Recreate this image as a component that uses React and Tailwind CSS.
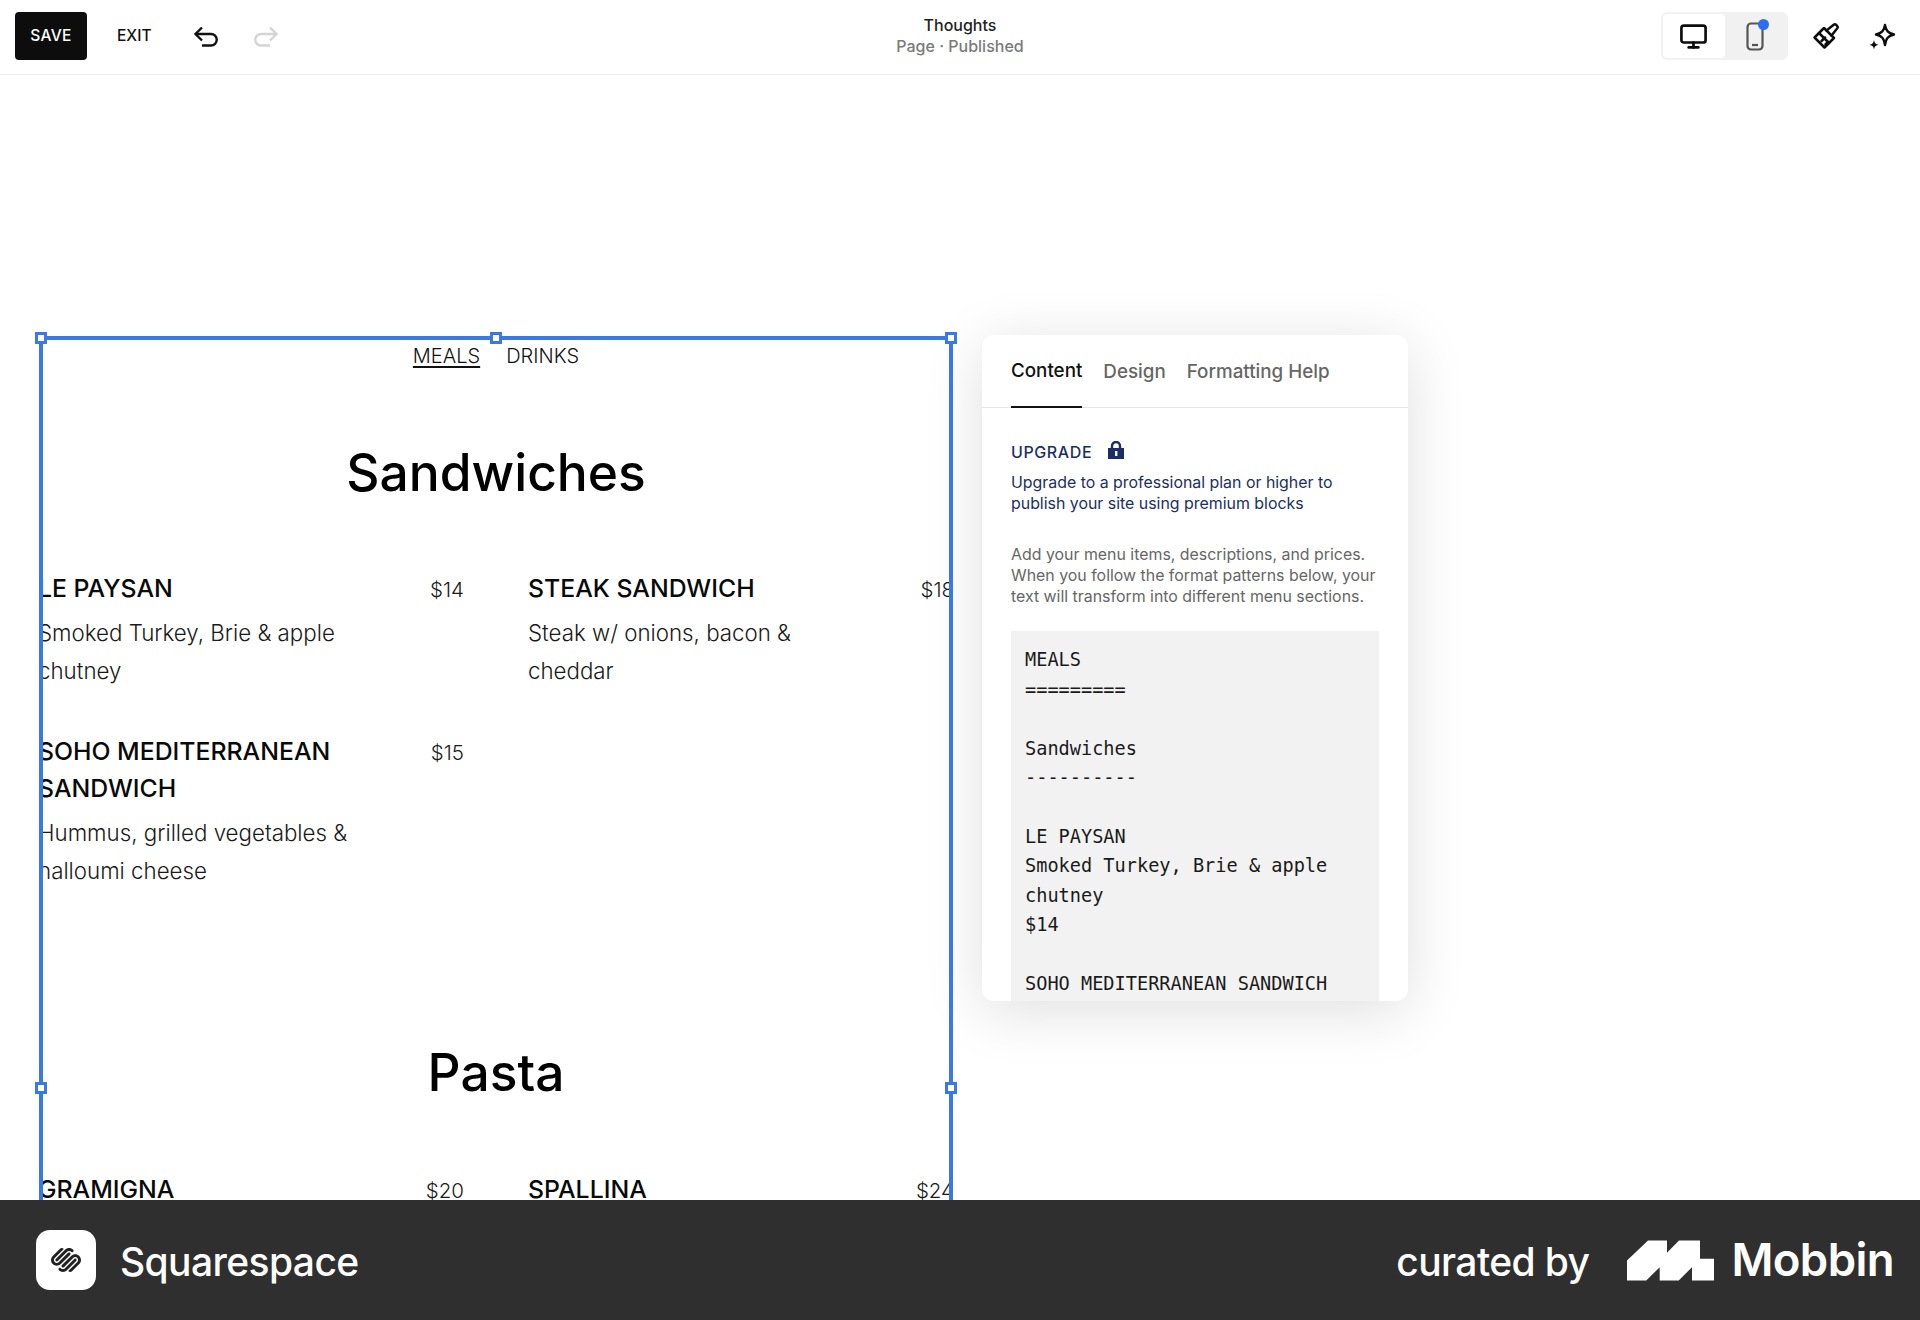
import React from 'react';
import { Monitor } from 'lucide-react';
import { SiSquarespace } from 'react-icons/si';

const UndoIcon = ({ flip, className }) => (
  <svg width="26" height="21" viewBox="0 0 26 21" fill="none" stroke="currentColor" strokeWidth="2.4" className={`${flip ? '-scale-x-100' : ''} ${className}`}>
    <path d="M9 1.5 L2.5 8 L9 14.5" />
    <path d="M2.5 8 H18 a5.5 5.5 0 0 1 0 11.5 H9" />
  </svg>
);

const PhoneIcon = () => (
  <svg width="18" height="29" viewBox="0 0 18 29" fill="none" stroke="currentColor" strokeWidth="2.2">
    <rect x="1.5" y="1.5" width="15" height="26" rx="3.5" />
    <path d="M6 23 H12" />
  </svg>
);

const BrushIcon = () => (
  <svg width="30" height="30" viewBox="0 0 30 30" fill="none" stroke="currentColor" strokeWidth="2.5" strokeLinejoin="round" strokeLinecap="round">
    <path d="M3.5 16.5 L13 7 L23 17 L13.5 26.5 Z" />
    <path d="M8 12 L18 22" />
    <path d="M10.5 20 L14 16.5" />
    <path d="M14.5 23.5 L17 21" />
    <path d="M15.5 9.5 L23 3.5 C24.5 2.5 27.5 5.5 26.5 7 L20.5 14.5" />
  </svg>
);

const SparkleIcon = () => (
  <svg width="30" height="30" viewBox="0 0 30 30" fill="none">
    <path d="M18 4 C19 10 21 12 27 13.5 C21 15 19 17 18 24 C17 17 15 15 9 13.5 C15 12 17 10 18 4 Z" stroke="currentColor" strokeWidth="2.4" strokeLinejoin="round" />
    <path d="M7 19 C7.5 22 8.5 23 11.5 23.8 C8.5 24.6 7.5 25.6 7 28.5 C6.5 25.6 5.5 24.6 2.5 23.8 C5.5 23 6.5 22 7 19 Z" fill="currentColor" />
  </svg>
);

const LockIcon = () => (
  <svg width="16" height="18" viewBox="0 0 16 18">
    <path d="M4 8 V5 a4 4 0 0 1 8 0 V8" fill="none" stroke="#1b2f66" strokeWidth="2.4" />
    <rect x="0" y="7" width="16" height="11" fill="#1b2f66" />
    <rect x="7" y="10" width="2.4" height="5" fill="#fff" />
  </svg>
);

const MobbinLogo = () => (
  <svg width="87" height="41" viewBox="0 0 87 40" fill="#fff">
    <path d="M0 40 L0 20 L21 0 L40 0 L40 12.3 L52 0 L73 0 L73 18.3 L87 18.3 L87 40 L65 40 L65 26.7 L51.7 40 L32.7 40 L32.7 26.7 L19.3 40 Z" />
  </svg>
);

const Handle = ({ className }) => (
  <div className={`absolute h-3 w-3 border-[3px] border-[#3b78e7] bg-white ${className}`} />
);

const MenuItem = ({ name, desc, price }) => (
  <div className="mb-[42px] flex justify-between">
    <div className="w-[330px]">
      <h3 className="text-[24.8px] leading-[37px] font-medium text-[#0a0a0a]">{name}</h3>
      {desc && <p className="mt-[7px] text-[22.3px] leading-[38.3px] font-light text-[#1a1a1a]">{desc}</p>}
    </div>
    <span className="mt-[5px] text-[20.5px] leading-[30px] font-light text-[#1a1a1a]">{price}</span>
  </div>
);

const codeLines = `MEALS
=========

Sandwiches
----------

LE PAYSAN
Smoked Turkey, Brie & apple
chutney
$14

SOHO MEDITERRANEAN SANDWICH`;

export default function App() {
  return (
    <div className="flex h-[1320px] w-[1920px] flex-col overflow-hidden bg-white font-['Inter',sans-serif]">
      {/* Top bar */}
      <header className="relative flex h-[75px] shrink-0 items-center justify-between border-b border-[#efefef] px-[15px] pb-[2px]">
        <div className="flex items-center">
          <button className="h-[48px] w-[72px] rounded-[4px] bg-[#0d0d0d] text-[15.5px] font-medium tracking-[0.3px] text-white">SAVE</button>
          <span className="ml-[30px] text-[15.5px] font-medium text-[#111]">EXIT</span>
          <UndoIcon className="ml-[41px] text-[#111]" />
          <UndoIcon flip className="ml-[34px] text-[#d4d4d4]" />
        </div>
        <div className="absolute left-0 right-0 top-[15px] text-center text-[16px] leading-[21px] font-medium">
          <div className="text-[#222]">Thoughts</div>
          <div className="text-[#7a7a7a]">Page · Published</div>
        </div>
        <div className="flex items-center text-[#0d0d0d]">
          <div className="flex h-[48px] w-[127px] rounded-[6px] bg-[#f1f1f1] p-[2px]">
            <div className="flex w-[62px] items-center justify-center rounded-[4px] bg-white pr-[2px]">
              <Monitor size={29} strokeWidth={2.2} />
            </div>
            <div className="relative flex flex-1 items-center justify-center pr-[2px] text-[#555]">
              <PhoneIcon />
              <span className="absolute right-[17px] top-[5px] h-[11px] w-[11px] rounded-full bg-[#2f6fed]" />
            </div>
          </div>
          <div className="ml-[23px]"><BrushIcon /></div>
          <div className="ml-[26px] mr-[8px]"><SparkleIcon /></div>
        </div>
      </header>

      {/* Canvas */}
      <main className="flex min-h-0 flex-1 items-start overflow-hidden pl-[39px] pt-[261px]">
        <div className="relative h-[1500px] w-[914px] shrink-0">
          <div className="h-full w-full overflow-hidden border-[4px] border-[#3b78e7]">
            <div className="-ml-[5px] w-[916px]">
              <div className="flex justify-center gap-[26px] pt-[2px] text-[20px] leading-[28px] font-light text-[#111]">
                <span className="underline underline-offset-[3px]">MEALS</span>
                <span>DRINKS</span>
              </div>
              <h2 className="mt-[70px] text-center text-[51.5px] leading-[64px] font-medium text-black">Sandwiches</h2>
              <div className="mt-[66px] grid grid-cols-2 gap-x-[64px]">
                <div>
                  <MenuItem name="LE PAYSAN" desc="Smoked Turkey, Brie & apple chutney" price="$14" />
                  <MenuItem name="SOHO MEDITERRANEAN SANDWICH" desc="Hummus, grilled vegetables & halloumi cheese" price="$15" />
                </div>
                <div>
                  <MenuItem name="STEAK SANDWICH" desc="Steak w/ onions, bacon & cheddar" price="$18" />
                </div>
              </div>
              <h2 className="mt-[108px] text-center text-[51.5px] leading-[64px] font-medium text-black">Pasta</h2>
              <div className="mt-[67px] grid grid-cols-2 gap-x-[64px]">
                <MenuItem name="GRAMIGNA" price="$20" />
                <MenuItem name="SPALLINA" price="$24" />
              </div>
            </div>
          </div>
          <Handle className="-left-[4px] -top-[4px]" />
          <Handle className="left-[451px] -top-[4px]" />
          <Handle className="-right-[4px] -top-[4px]" />
          <Handle className="-left-[4px] top-[746px]" />
          <Handle className="-right-[4px] top-[746px]" />
        </div>

        {/* Editor panel */}
        <aside className="ml-[29px] -mt-[1px] h-[666px] w-[426px] shrink-0 overflow-hidden rounded-[12px] bg-white shadow-[0_10px_60px_rgba(0,0,0,0.13)]">
          <div className="flex h-[73px] gap-[21px] border-b border-[#e5e5e5] px-[29px] text-[18.8px] font-medium text-[#666]">
            <span className="flex h-[73px] items-center border-b-[2px] border-[#111] pt-[2px] text-[#111]">Content</span>
            <span className="flex items-center pt-[2px]">Design</span>
            <span className="flex items-center pt-[2px]">Formatting Help</span>
          </div>
          <div className="px-[29px] pt-[34px]">
            <div className="flex items-center gap-[16px] text-[16px] leading-[20px] font-medium tracking-[0.6px] text-[#1b2f66]">
              UPGRADE <span className="-mt-[4px]"><LockIcon /></span>
            </div>
            <p className="mt-[10px] text-[15.9px] leading-[21.3px] text-[#1b2f66]">
              Upgrade to a professional plan or higher to publish your site using premium blocks
            </p>
            <p className="mt-[29px] text-[15.9px] leading-[21.3px] text-[#666]">
              Add your menu items, descriptions, and prices. When you follow the format patterns below, your text will transform into different menu sections.
            </p>
            <pre className="mt-[24px] bg-[#f2f2f2] px-[14px] py-[14px] font-['DejaVu_Sans_Mono',monospace] text-[18.6px] leading-[29.4px] text-[#1a1a1a]">{codeLines}</pre>
          </div>
        </aside>
      </main>

      {/* Footer */}
      <footer className="flex h-[120px] shrink-0 items-center justify-between bg-[#2f2f2f] pl-[36px] pr-[26px] text-white">
        <div className="flex items-center gap-[24px]">
          <div className="flex h-[60px] w-[60px] items-center justify-center rounded-[14px] bg-white text-[#222]">
            <SiSquarespace size={30} />
          </div>
          <span className="mt-[4px] text-[39px] font-medium tracking-[-0.6px]">Squarespace</span>
        </div>
        <div className="flex items-center">
          <span className="mt-[4px] text-[39px] font-medium tracking-[-0.6px]">curated by</span>
          <div className="ml-[38px]"><MobbinLogo /></div>
          <span className="ml-[17px] text-[45.5px] font-semibold tracking-[-0.6px]">Mobbin</span>
        </div>
      </footer>
    </div>
  );
}
